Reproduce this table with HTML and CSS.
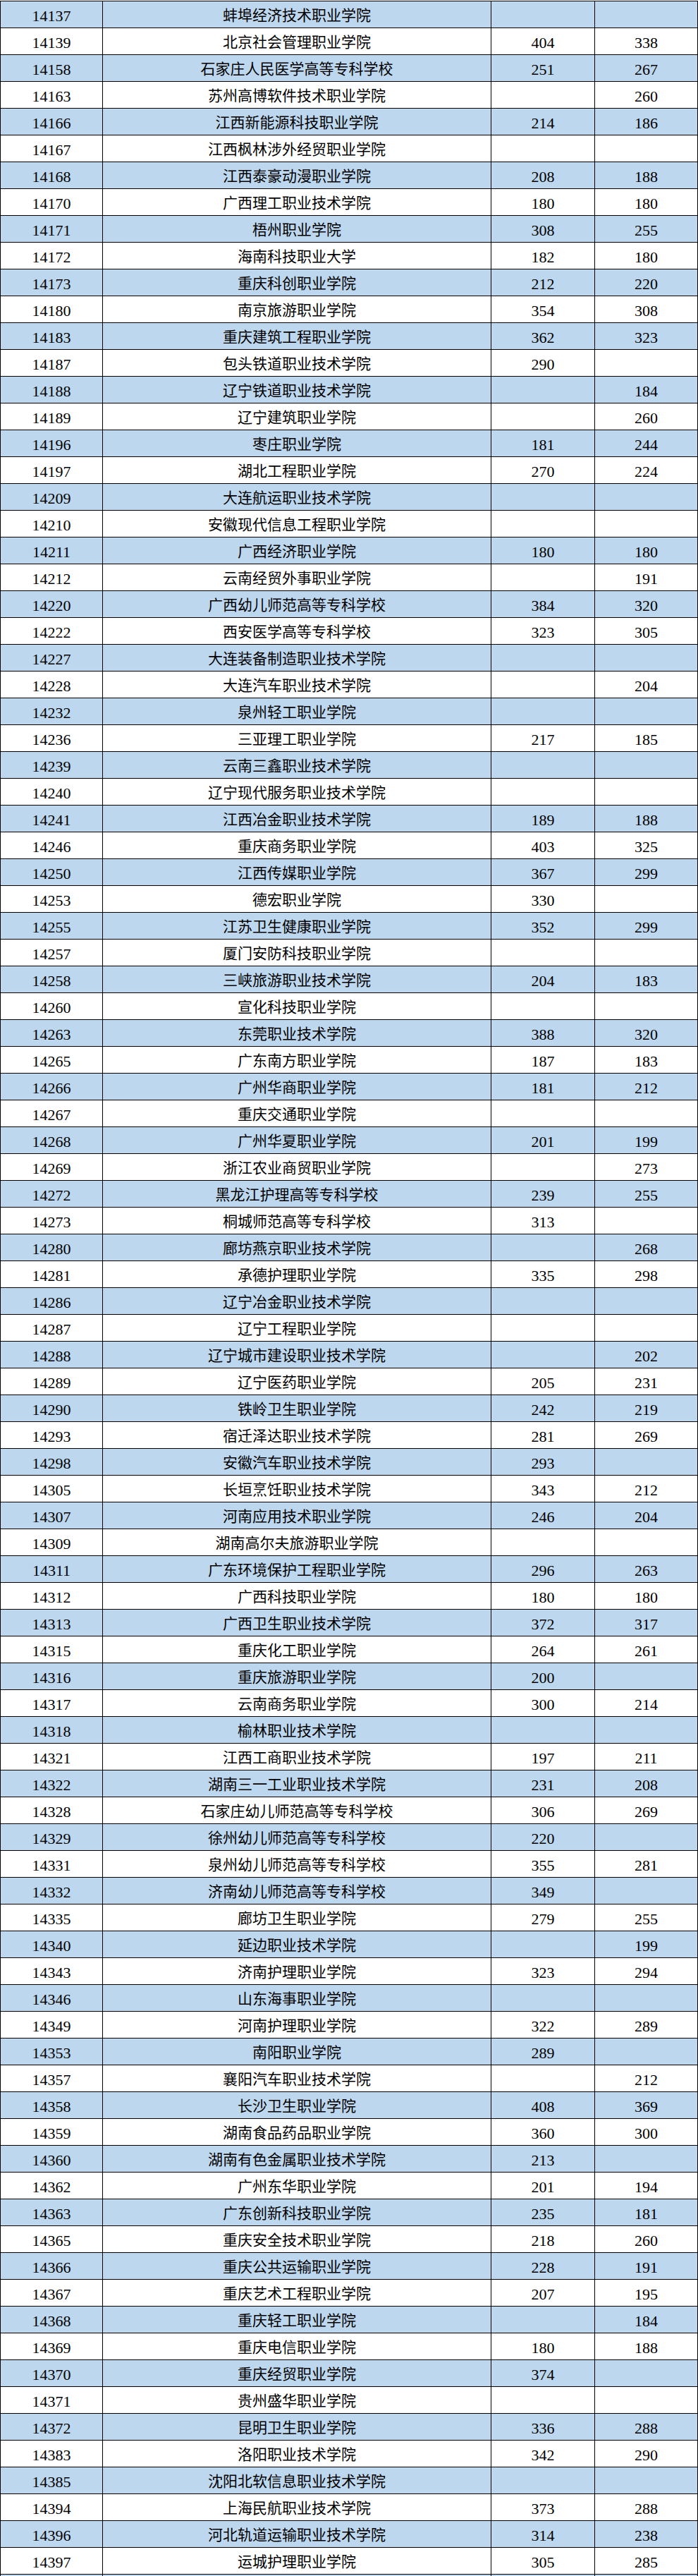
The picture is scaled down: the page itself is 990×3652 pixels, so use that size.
FILE: index.html
```html
<!DOCTYPE html>
<html lang="zh-CN">
<head>
<meta charset="utf-8">
<title>院校投档线</title>
<link rel="stylesheet" href="styles.css">
</head>
<body>
<div class="sheet">
<div class="row alt"><div class="cell code">14137</div><div class="cell name">蚌埠经济技术职业学院</div><div class="cell num"></div><div class="cell num last"></div></div>
<div class="row"><div class="cell code">14139</div><div class="cell name">北京社会管理职业学院</div><div class="cell num">404</div><div class="cell num last">338</div></div>
<div class="row alt"><div class="cell code">14158</div><div class="cell name">石家庄人民医学高等专科学校</div><div class="cell num">251</div><div class="cell num last">267</div></div>
<div class="row"><div class="cell code">14163</div><div class="cell name">苏州高博软件技术职业学院</div><div class="cell num"></div><div class="cell num last">260</div></div>
<div class="row alt"><div class="cell code">14166</div><div class="cell name">江西新能源科技职业学院</div><div class="cell num">214</div><div class="cell num last">186</div></div>
<div class="row"><div class="cell code">14167</div><div class="cell name">江西枫林涉外经贸职业学院</div><div class="cell num"></div><div class="cell num last"></div></div>
<div class="row alt"><div class="cell code">14168</div><div class="cell name">江西泰豪动漫职业学院</div><div class="cell num">208</div><div class="cell num last">188</div></div>
<div class="row"><div class="cell code">14170</div><div class="cell name">广西理工职业技术学院</div><div class="cell num">180</div><div class="cell num last">180</div></div>
<div class="row alt"><div class="cell code">14171</div><div class="cell name">梧州职业学院</div><div class="cell num">308</div><div class="cell num last">255</div></div>
<div class="row"><div class="cell code">14172</div><div class="cell name">海南科技职业大学</div><div class="cell num">182</div><div class="cell num last">180</div></div>
<div class="row alt"><div class="cell code">14173</div><div class="cell name">重庆科创职业学院</div><div class="cell num">212</div><div class="cell num last">220</div></div>
<div class="row"><div class="cell code">14180</div><div class="cell name">南京旅游职业学院</div><div class="cell num">354</div><div class="cell num last">308</div></div>
<div class="row alt"><div class="cell code">14183</div><div class="cell name">重庆建筑工程职业学院</div><div class="cell num">362</div><div class="cell num last">323</div></div>
<div class="row"><div class="cell code">14187</div><div class="cell name">包头铁道职业技术学院</div><div class="cell num">290</div><div class="cell num last"></div></div>
<div class="row alt"><div class="cell code">14188</div><div class="cell name">辽宁铁道职业技术学院</div><div class="cell num"></div><div class="cell num last">184</div></div>
<div class="row"><div class="cell code">14189</div><div class="cell name">辽宁建筑职业学院</div><div class="cell num"></div><div class="cell num last">260</div></div>
<div class="row alt"><div class="cell code">14196</div><div class="cell name">枣庄职业学院</div><div class="cell num">181</div><div class="cell num last">244</div></div>
<div class="row"><div class="cell code">14197</div><div class="cell name">湖北工程职业学院</div><div class="cell num">270</div><div class="cell num last">224</div></div>
<div class="row alt"><div class="cell code">14209</div><div class="cell name">大连航运职业技术学院</div><div class="cell num"></div><div class="cell num last"></div></div>
<div class="row"><div class="cell code">14210</div><div class="cell name">安徽现代信息工程职业学院</div><div class="cell num"></div><div class="cell num last"></div></div>
<div class="row alt"><div class="cell code">14211</div><div class="cell name">广西经济职业学院</div><div class="cell num">180</div><div class="cell num last">180</div></div>
<div class="row"><div class="cell code">14212</div><div class="cell name">云南经贸外事职业学院</div><div class="cell num"></div><div class="cell num last">191</div></div>
<div class="row alt"><div class="cell code">14220</div><div class="cell name">广西幼儿师范高等专科学校</div><div class="cell num">384</div><div class="cell num last">320</div></div>
<div class="row"><div class="cell code">14222</div><div class="cell name">西安医学高等专科学校</div><div class="cell num">323</div><div class="cell num last">305</div></div>
<div class="row alt"><div class="cell code">14227</div><div class="cell name">大连装备制造职业技术学院</div><div class="cell num"></div><div class="cell num last"></div></div>
<div class="row"><div class="cell code">14228</div><div class="cell name">大连汽车职业技术学院</div><div class="cell num"></div><div class="cell num last">204</div></div>
<div class="row alt"><div class="cell code">14232</div><div class="cell name">泉州轻工职业学院</div><div class="cell num"></div><div class="cell num last"></div></div>
<div class="row"><div class="cell code">14236</div><div class="cell name">三亚理工职业学院</div><div class="cell num">217</div><div class="cell num last">185</div></div>
<div class="row alt"><div class="cell code">14239</div><div class="cell name">云南三鑫职业技术学院</div><div class="cell num"></div><div class="cell num last"></div></div>
<div class="row"><div class="cell code">14240</div><div class="cell name">辽宁现代服务职业技术学院</div><div class="cell num"></div><div class="cell num last"></div></div>
<div class="row alt"><div class="cell code">14241</div><div class="cell name">江西冶金职业技术学院</div><div class="cell num">189</div><div class="cell num last">188</div></div>
<div class="row"><div class="cell code">14246</div><div class="cell name">重庆商务职业学院</div><div class="cell num">403</div><div class="cell num last">325</div></div>
<div class="row alt"><div class="cell code">14250</div><div class="cell name">江西传媒职业学院</div><div class="cell num">367</div><div class="cell num last">299</div></div>
<div class="row"><div class="cell code">14253</div><div class="cell name">德宏职业学院</div><div class="cell num">330</div><div class="cell num last"></div></div>
<div class="row alt"><div class="cell code">14255</div><div class="cell name">江苏卫生健康职业学院</div><div class="cell num">352</div><div class="cell num last">299</div></div>
<div class="row"><div class="cell code">14257</div><div class="cell name">厦门安防科技职业学院</div><div class="cell num"></div><div class="cell num last"></div></div>
<div class="row alt"><div class="cell code">14258</div><div class="cell name">三峡旅游职业技术学院</div><div class="cell num">204</div><div class="cell num last">183</div></div>
<div class="row"><div class="cell code">14260</div><div class="cell name">宣化科技职业学院</div><div class="cell num"></div><div class="cell num last"></div></div>
<div class="row alt"><div class="cell code">14263</div><div class="cell name">东莞职业技术学院</div><div class="cell num">388</div><div class="cell num last">320</div></div>
<div class="row"><div class="cell code">14265</div><div class="cell name">广东南方职业学院</div><div class="cell num">187</div><div class="cell num last">183</div></div>
<div class="row alt"><div class="cell code">14266</div><div class="cell name">广州华商职业学院</div><div class="cell num">181</div><div class="cell num last">212</div></div>
<div class="row"><div class="cell code">14267</div><div class="cell name">重庆交通职业学院</div><div class="cell num"></div><div class="cell num last"></div></div>
<div class="row alt"><div class="cell code">14268</div><div class="cell name">广州华夏职业学院</div><div class="cell num">201</div><div class="cell num last">199</div></div>
<div class="row"><div class="cell code">14269</div><div class="cell name">浙江农业商贸职业学院</div><div class="cell num"></div><div class="cell num last">273</div></div>
<div class="row alt"><div class="cell code">14272</div><div class="cell name">黑龙江护理高等专科学校</div><div class="cell num">239</div><div class="cell num last">255</div></div>
<div class="row"><div class="cell code">14273</div><div class="cell name">桐城师范高等专科学校</div><div class="cell num">313</div><div class="cell num last"></div></div>
<div class="row alt"><div class="cell code">14280</div><div class="cell name">廊坊燕京职业技术学院</div><div class="cell num"></div><div class="cell num last">268</div></div>
<div class="row"><div class="cell code">14281</div><div class="cell name">承德护理职业学院</div><div class="cell num">335</div><div class="cell num last">298</div></div>
<div class="row alt"><div class="cell code">14286</div><div class="cell name">辽宁冶金职业技术学院</div><div class="cell num"></div><div class="cell num last"></div></div>
<div class="row"><div class="cell code">14287</div><div class="cell name">辽宁工程职业学院</div><div class="cell num"></div><div class="cell num last"></div></div>
<div class="row alt"><div class="cell code">14288</div><div class="cell name">辽宁城市建设职业技术学院</div><div class="cell num"></div><div class="cell num last">202</div></div>
<div class="row"><div class="cell code">14289</div><div class="cell name">辽宁医药职业学院</div><div class="cell num">205</div><div class="cell num last">231</div></div>
<div class="row alt"><div class="cell code">14290</div><div class="cell name">铁岭卫生职业学院</div><div class="cell num">242</div><div class="cell num last">219</div></div>
<div class="row"><div class="cell code">14293</div><div class="cell name">宿迁泽达职业技术学院</div><div class="cell num">281</div><div class="cell num last">269</div></div>
<div class="row alt"><div class="cell code">14298</div><div class="cell name">安徽汽车职业技术学院</div><div class="cell num">293</div><div class="cell num last"></div></div>
<div class="row"><div class="cell code">14305</div><div class="cell name">长垣烹饪职业技术学院</div><div class="cell num">343</div><div class="cell num last">212</div></div>
<div class="row alt"><div class="cell code">14307</div><div class="cell name">河南应用技术职业学院</div><div class="cell num">246</div><div class="cell num last">204</div></div>
<div class="row"><div class="cell code">14309</div><div class="cell name">湖南高尔夫旅游职业学院</div><div class="cell num"></div><div class="cell num last"></div></div>
<div class="row alt"><div class="cell code">14311</div><div class="cell name">广东环境保护工程职业学院</div><div class="cell num">296</div><div class="cell num last">263</div></div>
<div class="row"><div class="cell code">14312</div><div class="cell name">广西科技职业学院</div><div class="cell num">180</div><div class="cell num last">180</div></div>
<div class="row alt"><div class="cell code">14313</div><div class="cell name">广西卫生职业技术学院</div><div class="cell num">372</div><div class="cell num last">317</div></div>
<div class="row"><div class="cell code">14315</div><div class="cell name">重庆化工职业学院</div><div class="cell num">264</div><div class="cell num last">261</div></div>
<div class="row alt"><div class="cell code">14316</div><div class="cell name">重庆旅游职业学院</div><div class="cell num">200</div><div class="cell num last"></div></div>
<div class="row"><div class="cell code">14317</div><div class="cell name">云南商务职业学院</div><div class="cell num">300</div><div class="cell num last">214</div></div>
<div class="row alt"><div class="cell code">14318</div><div class="cell name">榆林职业技术学院</div><div class="cell num"></div><div class="cell num last"></div></div>
<div class="row"><div class="cell code">14321</div><div class="cell name">江西工商职业技术学院</div><div class="cell num">197</div><div class="cell num last">211</div></div>
<div class="row alt"><div class="cell code">14322</div><div class="cell name">湖南三一工业职业技术学院</div><div class="cell num">231</div><div class="cell num last">208</div></div>
<div class="row"><div class="cell code">14328</div><div class="cell name">石家庄幼儿师范高等专科学校</div><div class="cell num">306</div><div class="cell num last">269</div></div>
<div class="row alt"><div class="cell code">14329</div><div class="cell name">徐州幼儿师范高等专科学校</div><div class="cell num">220</div><div class="cell num last"></div></div>
<div class="row"><div class="cell code">14331</div><div class="cell name">泉州幼儿师范高等专科学校</div><div class="cell num">355</div><div class="cell num last">281</div></div>
<div class="row alt"><div class="cell code">14332</div><div class="cell name">济南幼儿师范高等专科学校</div><div class="cell num">349</div><div class="cell num last"></div></div>
<div class="row"><div class="cell code">14335</div><div class="cell name">廊坊卫生职业学院</div><div class="cell num">279</div><div class="cell num last">255</div></div>
<div class="row alt"><div class="cell code">14340</div><div class="cell name">延边职业技术学院</div><div class="cell num"></div><div class="cell num last">199</div></div>
<div class="row"><div class="cell code">14343</div><div class="cell name">济南护理职业学院</div><div class="cell num">323</div><div class="cell num last">294</div></div>
<div class="row alt"><div class="cell code">14346</div><div class="cell name">山东海事职业学院</div><div class="cell num"></div><div class="cell num last"></div></div>
<div class="row"><div class="cell code">14349</div><div class="cell name">河南护理职业学院</div><div class="cell num">322</div><div class="cell num last">289</div></div>
<div class="row alt"><div class="cell code">14353</div><div class="cell name">南阳职业学院</div><div class="cell num">289</div><div class="cell num last"></div></div>
<div class="row"><div class="cell code">14357</div><div class="cell name">襄阳汽车职业技术学院</div><div class="cell num"></div><div class="cell num last">212</div></div>
<div class="row alt"><div class="cell code">14358</div><div class="cell name">长沙卫生职业学院</div><div class="cell num">408</div><div class="cell num last">369</div></div>
<div class="row"><div class="cell code">14359</div><div class="cell name">湖南食品药品职业学院</div><div class="cell num">360</div><div class="cell num last">300</div></div>
<div class="row alt"><div class="cell code">14360</div><div class="cell name">湖南有色金属职业技术学院</div><div class="cell num">213</div><div class="cell num last"></div></div>
<div class="row"><div class="cell code">14362</div><div class="cell name">广州东华职业学院</div><div class="cell num">201</div><div class="cell num last">194</div></div>
<div class="row alt"><div class="cell code">14363</div><div class="cell name">广东创新科技职业学院</div><div class="cell num">235</div><div class="cell num last">181</div></div>
<div class="row"><div class="cell code">14365</div><div class="cell name">重庆安全技术职业学院</div><div class="cell num">218</div><div class="cell num last">260</div></div>
<div class="row alt"><div class="cell code">14366</div><div class="cell name">重庆公共运输职业学院</div><div class="cell num">228</div><div class="cell num last">191</div></div>
<div class="row"><div class="cell code">14367</div><div class="cell name">重庆艺术工程职业学院</div><div class="cell num">207</div><div class="cell num last">195</div></div>
<div class="row alt"><div class="cell code">14368</div><div class="cell name">重庆轻工职业学院</div><div class="cell num"></div><div class="cell num last">184</div></div>
<div class="row"><div class="cell code">14369</div><div class="cell name">重庆电信职业学院</div><div class="cell num">180</div><div class="cell num last">188</div></div>
<div class="row alt"><div class="cell code">14370</div><div class="cell name">重庆经贸职业学院</div><div class="cell num">374</div><div class="cell num last"></div></div>
<div class="row"><div class="cell code">14371</div><div class="cell name">贵州盛华职业学院</div><div class="cell num"></div><div class="cell num last"></div></div>
<div class="row alt"><div class="cell code">14372</div><div class="cell name">昆明卫生职业学院</div><div class="cell num">336</div><div class="cell num last">288</div></div>
<div class="row"><div class="cell code">14383</div><div class="cell name">洛阳职业技术学院</div><div class="cell num">342</div><div class="cell num last">290</div></div>
<div class="row alt"><div class="cell code">14385</div><div class="cell name">沈阳北软信息职业技术学院</div><div class="cell num"></div><div class="cell num last"></div></div>
<div class="row"><div class="cell code">14394</div><div class="cell name">上海民航职业技术学院</div><div class="cell num">373</div><div class="cell num last">288</div></div>
<div class="row alt"><div class="cell code">14396</div><div class="cell name">河北轨道运输职业技术学院</div><div class="cell num">314</div><div class="cell num last">238</div></div>
<div class="row"><div class="cell code">14397</div><div class="cell name">运城护理职业学院</div><div class="cell num">305</div><div class="cell num last">285</div></div>
<div class="row alt"><div class="cell code"></div><div class="cell name"></div><div class="cell num"></div><div class="cell num last"></div></div>
</div>
</body>
</html>
```

FILE: styles.css
```css
html, body {
  margin: 0;
  padding: 0;
  background: #ffffff;
}

body {
  font-family: "Liberation Serif", "Noto Sans CJK SC", serif;
  color: #000000;
}

.sheet {
  width: 990px;
  margin-top: 1px;
  border-top: 1px solid #000000;
}

.row {
  display: grid;
  grid-template-columns: 145px 551px 147px 147px;
  height: 38px;
  box-sizing: border-box;
  border-bottom: 1px solid #000000;
  background: #ffffff;
}

.row.alt {
  background: #bdd7ee;
}

.cell {
  box-sizing: border-box;
  border-left: 1px solid #000000;
  padding-top: 4px;
  line-height: 33px;
  text-align: center;
  white-space: nowrap;
  overflow: hidden;
}

.cell.last {
  border-right: 1px solid #000000;
}

.code,
.num {
  font-size: 22px;
}

.name {
  font-family: "Liberation Serif", "Noto Sans CJK SC", sans-serif;
  font-size: 21px;
}
```
